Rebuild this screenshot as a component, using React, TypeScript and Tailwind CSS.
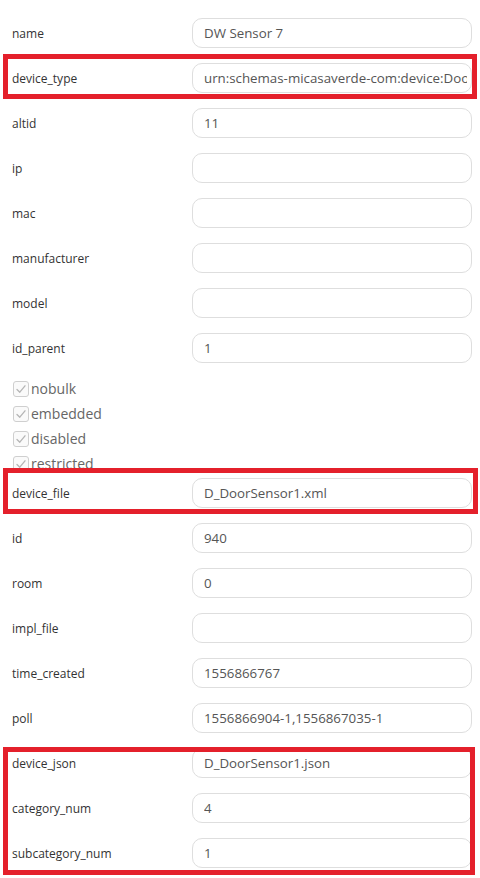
import React from 'react';

type Field = { label: string; value: string };

const topFields: Field[] = [
  { label: 'name', value: 'DW Sensor 7' },
  { label: 'device_type', value: 'urn:schemas-micasaverde-com:device:DoorSensor:1' },
  { label: 'altid', value: '11' },
  { label: 'ip', value: '' },
  { label: 'mac', value: '' },
  { label: 'manufacturer', value: '' },
  { label: 'model', value: '' },
  { label: 'id_parent', value: '1' },
];

const flags = ['nobulk', 'embedded', 'disabled', 'restricted'];

const midFields: Field[] = [
  { label: 'id', value: '940' },
  { label: 'room', value: '0' },
  { label: 'impl_file', value: '' },
  { label: 'time_created', value: '1556866767' },
  { label: 'poll', value: '1556866904-1,1556867035-1' },
];

const jsonFields: Field[] = [
  { label: 'device_json', value: 'D_DoorSensor1.json' },
  { label: 'category_num', value: '4' },
  { label: 'subcategory_num', value: '1' },
];

// red annotation frame drawn over a row / group
function Highlight({ className }: { className: string }) {
  return <div className={`pointer-events-none absolute border-[5px] border-[#e4202b] ${className}`} />;
}

function Row({ field, children }: { field: Field; children?: React.ReactNode }) {
  return (
    <div className="relative flex h-[45px] items-start bg-white pt-[8px]">
      <div className="flex h-[31px] w-[192px] shrink-0 items-center pl-[12px] text-[12px] text-[#333]">
        {field.label}
      </div>
      <input
        readOnly
        value={field.value}
        className="h-[30px] w-[280px] rounded-[10px] border border-[#dedede] bg-white pl-[11px] pr-1 text-[13.3px] text-[#555] outline-none"
        style={{ fontFamily: '"Open Sans", sans-serif' }}
      />
      {children}
    </div>
  );
}

function Flag({ label }: { label: string }) {
  return (
    <div className="flex h-[25px] items-center pl-[13px]">
      <span className="flex h-[16px] w-[16px] items-center justify-center rounded-[3px] border border-[#cfcfcf] bg-[#fafafa]">
        <svg width="12" height="12" viewBox="0 0 12 12" fill="none">
          <path d="M2 6.5 L4.8 9.2 L10 2.8" stroke="#b5b5b5" strokeWidth="1.3" strokeLinecap="round" strokeLinejoin="round" />
        </svg>
      </span>
      <span className="ml-[2px] text-[14px] text-[#666]">{label}</span>
    </div>
  );
}

export default function App() {
  return (
    <div className="h-[878px] w-[480px] overflow-hidden bg-white pt-[10px]" style={{ fontFamily: '"Open Sans", sans-serif' }}>
      {topFields.map((f) => (
        <Row key={f.label} field={f}>
          {f.label === 'device_type' && <Highlight className="left-[3px] right-[3px] top-[-1px] bottom-[1px]" />}
        </Row>
      ))}

      <div className="h-[100px] overflow-hidden pt-[6px]">
        {flags.map((l) => (
          <Flag key={l} label={l} />
        ))}
      </div>

      <Row field={{ label: 'device_file', value: 'D_DoorSensor1.xml' }}>
        <Highlight className="left-[3px] right-[2px] top-[-2px] bottom-[1px]" />
      </Row>

      {midFields.map((f) => (
        <Row key={f.label} field={f} />
      ))}

      <div className="relative">
        {jsonFields.map((f) => (
          <Row key={f.label} field={f} />
        ))}
        <Highlight className="left-[3px] right-[5px] top-[7px] bottom-0" />
      </div>
    </div>
  );
}
